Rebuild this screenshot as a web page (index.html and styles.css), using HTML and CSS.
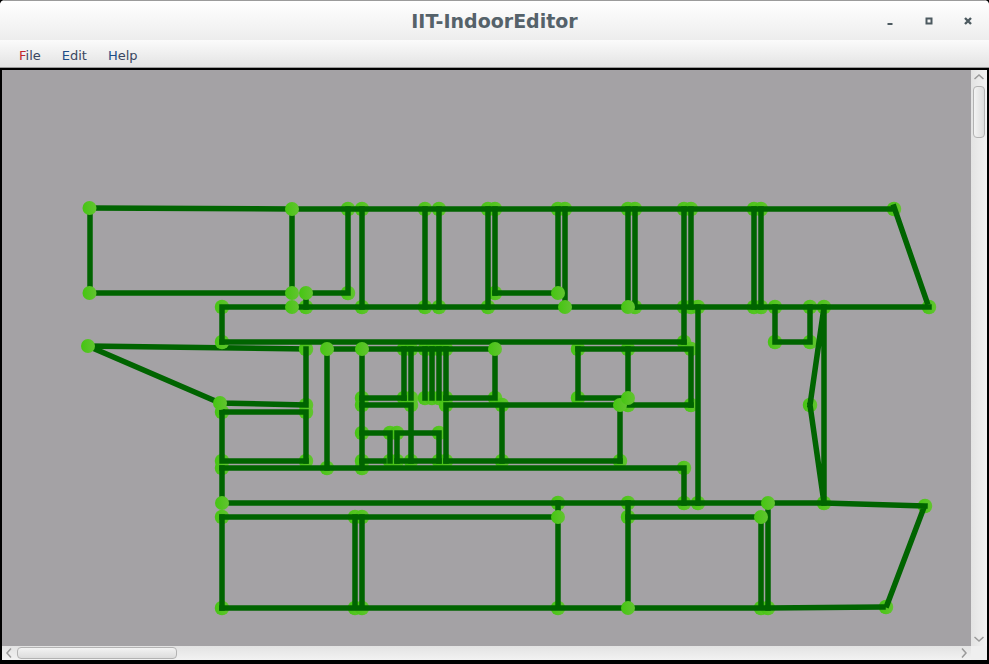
FILE: index.html
```html
<!DOCTYPE html>
<html lang="en">
<head>
  <meta charset="UTF-8" />
  <meta name="viewport" content="width=device-width, initial-scale=1.0" />
  <title>IIT-IndoorEditor</title>
  <link rel="stylesheet" href="styles.css">
</head>
<body>
  <div class="window">
    <header class="titlebar">
      <span class="title">IIT-IndoorEditor</span>
      <div class="win-buttons">
        <svg class="win-btn" width="16" height="16" viewBox="0 0 16 16"><rect x="5.5" y="10" width="5" height="2" /></svg>
        <svg class="win-btn" width="16" height="16" viewBox="0 0 16 16"><path d="M4.500 4.500h7v7h-7z M6.500 6.500v3h3v-3z" fill-rule="evenodd" /></svg>
        <svg class="win-btn" width="16" height="16" viewBox="0 0 16 16"><path d="M5 5l6 6M11 5l-6 6" class="close-x" /></svg>
      </div>
    </header>

    <nav class="menubar">
      <span class="menu-item">File</span>
      <span class="menu-item">Edit</span>
      <span class="menu-item">Help</span>
    </nav>

    <main class="pane">
      <div class="canvas">
        <!-- coordinates are window pixels, hence the viewBox offset -->
        <svg class="plan" width="969" height="576" viewBox="2 70 969 576">
          <defs>
            <linearGradient id="nodeFill">
              <stop offset="0" stop-color="#45c512" />
              <stop offset="1" stop-color="#62c430" />
            </linearGradient>
          </defs>

          <!-- walls the ring nodes sit on top of -->
          <g class="walls">
            <path d="M88 346L306 349" />
          </g>

          <!-- nodes under the other walls -->
          <g class="nodes rings">
            <circle cx="348" cy="209" r="7" /><circle cx="362" cy="209" r="7" /><circle cx="425" cy="209" r="7" />
            <circle cx="439" cy="209" r="7" /><circle cx="488" cy="209" r="7" /><circle cx="495" cy="209" r="7" />
            <circle cx="558" cy="209" r="7" /><circle cx="565" cy="209" r="7" /><circle cx="628" cy="209" r="7" />
            <circle cx="635" cy="209" r="7" /><circle cx="684" cy="209" r="7" /><circle cx="691" cy="209" r="7" />
            <circle cx="754" cy="209" r="7" /><circle cx="761" cy="209" r="7" /><circle cx="894" cy="209" r="7" />
            <circle cx="348" cy="293" r="7" /><circle cx="495" cy="293" r="7" />
            <circle cx="222" cy="307" r="7" /><circle cx="306" cy="307" r="7" /><circle cx="362" cy="307" r="7" />
            <circle cx="425" cy="307" r="7" /><circle cx="439" cy="307" r="7" /><circle cx="488" cy="307" r="7" />
            <circle cx="635" cy="307" r="7" /><circle cx="684" cy="307" r="7" /><circle cx="691" cy="307" r="7" />
            <circle cx="698" cy="307" r="7" /><circle cx="754" cy="307" r="7" /><circle cx="761" cy="307" r="7" />
            <circle cx="775" cy="307" r="7" /><circle cx="810" cy="307" r="7" /><circle cx="824" cy="307" r="7" />
            <circle cx="929" cy="307" r="7" />
            <circle cx="222" cy="342" r="7" /><circle cx="684" cy="342" r="7" /><circle cx="775" cy="342" r="7" />
            <circle cx="810" cy="342" r="7" />
            <circle cx="306" cy="349" r="7" /><circle cx="404" cy="349" r="7" /><circle cx="411" cy="349" r="7" />
            <circle cx="425" cy="349" r="7" /><circle cx="432" cy="349" r="7" /><circle cx="439" cy="349" r="7" />
            <circle cx="446" cy="349" r="7" /><circle cx="578" cy="349" r="7" /><circle cx="628" cy="349" r="7" />
            <circle cx="691" cy="349" r="7" />
            <circle cx="362" cy="398" r="7" /><circle cx="404" cy="398" r="7" /><circle cx="411" cy="398" r="7" />
            <circle cx="425" cy="398" r="7" /><circle cx="432" cy="398" r="7" /><circle cx="439" cy="398" r="7" />
            <circle cx="446" cy="398" r="7" /><circle cx="495" cy="398" r="7" /><circle cx="578" cy="398" r="7" />
            <circle cx="306" cy="405" r="7" /><circle cx="362" cy="405" r="7" /><circle cx="411" cy="405" r="7" />
            <circle cx="446" cy="405" r="7" /><circle cx="502" cy="405" r="7" /><circle cx="628" cy="405" r="7" />
            <circle cx="691" cy="405" r="7" /><circle cx="810" cy="405" r="7" />
            <circle cx="222" cy="412" r="7" /><circle cx="306" cy="412" r="7" />
            <circle cx="362" cy="433" r="7" /><circle cx="390" cy="433" r="7" /><circle cx="397" cy="433" r="7" />
            <circle cx="439" cy="433" r="7" />
            <circle cx="222" cy="461" r="7" /><circle cx="306" cy="461" r="7" /><circle cx="362" cy="461" r="7" />
            <circle cx="390" cy="461" r="7" /><circle cx="397" cy="461" r="7" /><circle cx="411" cy="461" r="7" />
            <circle cx="439" cy="461" r="7" /><circle cx="446" cy="461" r="7" /><circle cx="502" cy="461" r="7" />
            <circle cx="620" cy="461" r="7" />
            <circle cx="222" cy="468" r="7" /><circle cx="327" cy="468" r="7" /><circle cx="362" cy="468" r="7" />
            <circle cx="684" cy="468" r="7" />
            <circle cx="558" cy="503" r="7" /><circle cx="628" cy="503" r="7" /><circle cx="684" cy="503" r="7" />
            <circle cx="698" cy="503" r="7" /><circle cx="824" cy="503" r="7" /><circle cx="925" cy="506" r="7" />
            <circle cx="222" cy="517" r="7" /><circle cx="355" cy="517" r="7" /><circle cx="362" cy="517" r="7" />
            <circle cx="628" cy="517" r="7" />
            <circle cx="222" cy="608" r="7" /><circle cx="355" cy="608" r="7" /><circle cx="362" cy="608" r="7" />
            <circle cx="558" cy="608" r="7" /><circle cx="761" cy="608" r="7" /><circle cx="768" cy="608" r="7" />
            <circle cx="886" cy="607" r="7" />
          </g>

          <!-- walls -->
          <g class="walls">
            <path d="M90 208L292 209H891M894 207L927 302" />
            <path d="M90 208V293H292V209M306 293H348V209M495 293H558" />
            <path d="M362 209V307M425 209V307M439 209V307M488 209V307M495 209V293M558 209V293M565 209V307" />
            <path d="M628 209V307M635 209V307M684 209V342M691 209V307M754 209V307M761 209V307M306 293V307" />
            <path d="M222 342V307H929" />
            <path d="M222 342H684" />
            <path d="M327 349H495M578 349H691V405" />
            <path d="M88 346L220 403M220 403L306 405M222 412H306M306 349V405M306 412V461" />
            <path d="M327 349V468M362 349V468M404 349V398M411 349V398M425 349V398M432 349V398M439 349V398M446 349V398" />
            <path d="M362 398H404M446 398H495V349M578 349V398H628V349" />
            <path d="M362 405H411V461M446 405H691M446 405V461M502 405V461M620 405V461" />
            <path d="M362 433H385M397 433H439V461M390 433V461M397 433V461" />
            <path d="M222 412V461M222 468V503M222 517V608M222 461H306M362 461H384M397 461H439M446 461H620" />
            <path d="M222 468H684V503" />
            <path d="M222 503H768L824 503L925 506M923 510L887 605M768 608L883 607M222 517H558M628 517H761" />
            <path d="M222 608H768M355 517V608M362 517V608M558 503V608M628 503V608M761 517V608M768 503V608" />
            <path d="M698 307V503M775 307V342H810M810 307V342" />
            <path d="M824 307V503M824 307L810 405M810 405L824 503" />
          </g>

          <!-- nodes over the walls -->
          <g class="nodes">
            <circle cx="89.500" cy="208" r="7" /><circle cx="292" cy="209" r="7" /><circle cx="89.500" cy="293" r="7" />
            <circle cx="292" cy="293" r="7" /><circle cx="306" cy="293" r="7" /><circle cx="292" cy="307" r="7" />
            <circle cx="558" cy="293" r="7" /><circle cx="565" cy="307" r="7" /><circle cx="628" cy="307" r="7" />
            <circle cx="88" cy="346" r="7" /><circle cx="327" cy="349" r="7" /><circle cx="362" cy="349" r="7" />
            <circle cx="495" cy="349" r="7" /><circle cx="220" cy="403" r="7" /><circle cx="620" cy="405" r="7" />
            <circle cx="628" cy="398" r="7" /><circle cx="222" cy="503" r="7" /><circle cx="558" cy="517" r="7" />
            <circle cx="761" cy="517" r="7" /><circle cx="768" cy="503" r="7" /><circle cx="628" cy="608" r="7" />
          </g>
        </svg>
      </div>

      <div class="vscroll">
        <svg class="arrow" width="12" height="8" viewBox="0 0 12 8"><path d="M1.500 6L6 2l4.500 4" /></svg>
        <div class="vthumb"></div>
        <svg class="arrow arrow-end" width="12" height="8" viewBox="0 0 12 8"><path d="M1.500 2L6 6l4.500-4" /></svg>
      </div>

      <div class="hscroll">
        <svg class="arrow" width="8" height="12" viewBox="0 0 8 12"><path d="M6 1.500L2 6l4 4.500" /></svg>
        <div class="hthumb"></div>
        <svg class="arrow arrow-end" width="8" height="12" viewBox="0 0 8 12"><path d="M2 1.500L6 6l-4 4.500" /></svg>
      </div>
      <div class="corner"></div>
    </main>
  </div>
</body>
</html>
```

FILE: styles.css
```css
* {
  box-sizing: border-box;
}

html, body {
  height: 100%;
}

body {
  margin: 0;
  background: #000;
  overflow: hidden;
}

.window {
  display: flex;
  flex-direction: column;
  width: 989px;
  height: 664px;
  border-radius: 5px 5px 0 0;
  overflow: hidden;
  background: #f0f0f0;
}

.titlebar {
  display: flex;
  align-items: center;
  justify-content: center;
  position: relative;
  flex: 0 0 40px;
  border-top: 1px solid #9b9b9b;
  background: linear-gradient(#ffffff, #ededed);
}

.title {
  font-family: "DejaVu Sans", sans-serif;
  font-size: 19px;
  font-weight: 700;
  color: #55626a;
}

.win-buttons {
  position: absolute;
  top: 12px;
  right: 13px;
  display: flex;
  gap: 23px;
}

.win-btn {
  fill: #4d5a60;
}

.close-x {
  fill: none;
  stroke: #4d5a60;
  stroke-width: 2.400;
}

.menubar {
  display: flex;
  align-items: center;
  gap: 21px;
  flex: 0 0 28px;
  padding: 4px 0 0 19px;
  border-bottom: 1px solid #9a9a9a;
  background: linear-gradient(#fbfbfb, #e3e3e3);
}

.menu-item {
  font-family: "DejaVu Sans", sans-serif;
  font-size: 13px;
  color: #3a4660;
}

.menu-item::first-letter {
  color: #1d4e89;
}

.menu-item:first-child::first-letter {
  color: #c0272d;
}

.pane {
  display: grid;
  grid-template-columns: 969px 16px;
  grid-template-rows: 576px 14px;
  flex: 1;
  border: solid #000;
  border-width: 2px 2px 4px 2px;
  background: #ececec;
}

.canvas {
  background: #a4a2a5;
  overflow: hidden;
}

.plan {
  display: block;
}

.nodes circle {
  fill: url(#nodeFill);
}

.rings circle {
  r: 7.250px;
}

.walls path {
  fill: none;
  stroke: #006400;
  stroke-width: 5.500;
  stroke-linecap: square;
  stroke-linejoin: miter;
}

.vscroll {
  display: flex;
  flex-direction: column;
  align-items: center;
  padding: 3px 0;
  background: linear-gradient(90deg, #e3e3e3, #f2f2f2);
}

.hscroll {
  display: flex;
  align-items: center;
  padding: 0 3px;
  background: linear-gradient(#e3e3e3, #f2f2f2);
}

.corner {
  background: #efefef;
}

.arrow {
  flex: none;
}

.arrow path {
  fill: none;
  stroke: #9a9a9a;
  stroke-width: 1.500;
}

.arrow-end {
  margin-top: auto;
}

.hscroll .arrow-end {
  margin: 0 0 0 auto;
}

.vthumb {
  width: 12px;
  height: 52px;
  margin-top: 5px;
  border: 1px solid #b3b3b3;
  border-radius: 4px;
  background: linear-gradient(90deg, #f3f3f3, #dcdcdc);
}

.hthumb {
  width: 160px;
  height: 12px;
  margin-left: 4px;
  border: 1px solid #b3b3b3;
  border-radius: 4px;
  background: linear-gradient(#f3f3f3, #dcdcdc);
}
```
